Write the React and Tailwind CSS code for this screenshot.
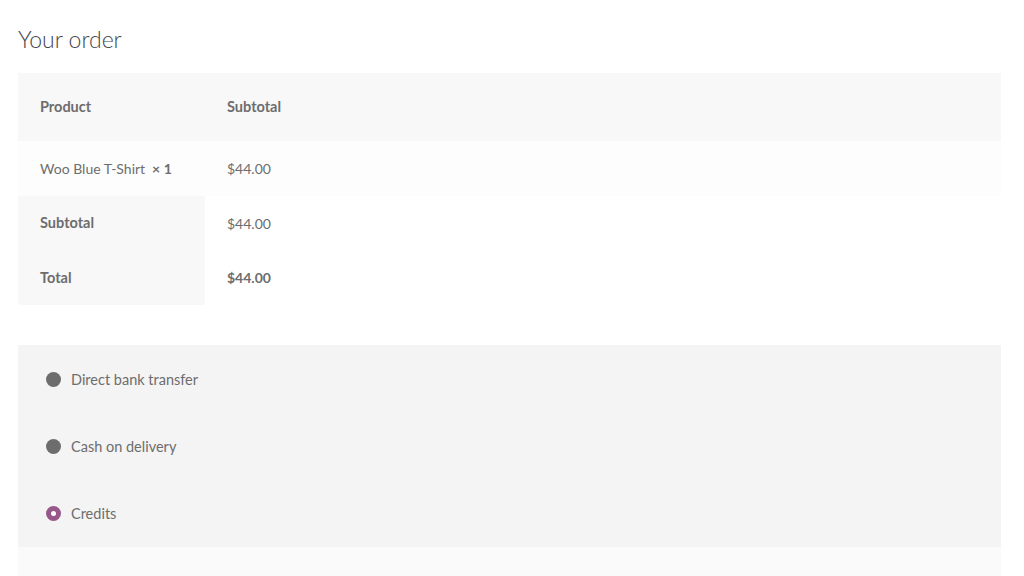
import React from 'react'

const methods = [
  { label: 'Direct bank transfer', selected: false },
  { label: 'Cash on delivery', selected: false },
  { label: 'Credits', selected: true },
]

const Radio = ({ selected }) =>
  selected ? (
    <span className="w-[15px] h-[15px] rounded-full bg-[#96588a] flex items-center justify-center">
      <span className="w-[5px] h-[5px] rounded-full bg-white" />
    </span>
  ) : (
    <span className="w-[15px] h-[15px] rounded-full bg-[#6d6d6d]" />
  )

export default function App() {
  return (
    <div className="min-h-screen bg-white text-[#6d6d6d] px-[18px] pt-[24px] font-['Lato',sans-serif]">
      <h2 className="text-[23px] font-light text-[#43454b] leading-[30px] mb-[19px]">Your order</h2>

      <div className="w-[983px] text-[14px]">
        <div className="flex h-[68px] items-center bg-[#f8f8f8] font-bold text-[14.5px]">
          <div className="w-[187px] pl-[22px]">Product</div>
          <div className="pl-[22px]">Subtotal</div>
        </div>
        <div className="flex h-[55px] items-center bg-[#fdfdfd]">
          <div className="w-[187px] pl-[22px]">
            Woo Blue T-Shirt <span className="font-bold">&nbsp;× 1</span>
          </div>
          <div className="pl-[22px]">$44.00</div>
        </div>
        <div className="flex h-[54px]">
          <div className="w-[187px] pl-[22px] bg-[#f8f8f8] flex items-center font-bold text-[14.5px]">Subtotal</div>
          <div className="pl-[22px] flex items-center">$44.00</div>
        </div>
        <div className="flex h-[55px]">
          <div className="w-[187px] pl-[22px] bg-[#f8f8f8] flex items-center font-bold text-[14.5px]">Total</div>
          <div className="pl-[22px] flex items-center font-bold">$44.00</div>
        </div>
      </div>

      <div className="w-[983px] mt-[40px]">
        <div className="bg-[#f4f4f4] h-[202px] flex flex-col pt-[1px]">
          {methods.map((m) => (
            <div key={m.label} className="h-[67px] flex items-center pl-[28px] gap-[10px] text-[14.5px]">
              <Radio selected={m.selected} />
              <span>{m.label}</span>
            </div>
          ))}
        </div>
        <div className="bg-[#fafafa] h-[40px]" />
      </div>
    </div>
  )
}
